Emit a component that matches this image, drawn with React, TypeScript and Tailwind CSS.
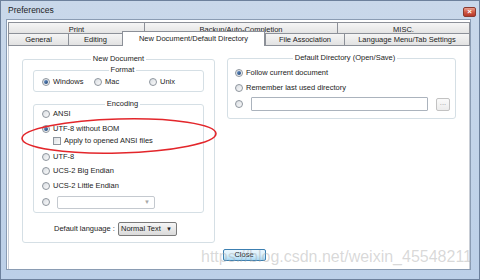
import React from "react";

function Radio({ checked }: { checked?: boolean }) {
  return (
    <span className="flex h-[8px] w-[8px] shrink-0 items-center justify-center rounded-full border border-[#8e959d] bg-gradient-to-br from-[#d9dde2] to-[#fbfbfb]">
      {checked && <span className="h-[4px] w-[4px] rounded-full bg-gradient-to-br from-[#6f9bd0] to-[#1d3f6e]" />}
    </span>
  );
}

function Check() {
  return <span className="h-[8px] w-[8px] shrink-0 border border-[#8e959d] bg-gradient-to-br from-[#dcdfe3] to-[#fbfbfb]" />;
}

function Tab({ w, label, last, sel }: { w: string; label: string; last?: boolean; sel?: boolean }) {
  return (
    <div
      className={
        sel
          ? `${w} flex h-[15px] shrink-0 items-start justify-center border-l border-r border-t border-[#8c9098] bg-white pt-[3px] leading-[8px]`
          : `${w} flex h-[13px] shrink-0 items-center justify-center border-b border-l border-t border-[#8c9098] bg-gradient-to-b from-[#f5f5f5] to-[#e2e2e2] pt-[1px] leading-[8px] ${last ? "border-r" : ""}`
      }
    >
      {label}
    </div>
  );
}

function TopTab({ w, label, last }: { w: string; label: string; last?: boolean }) {
  return (
    <div
      className={`${w} flex h-[11px] shrink-0 items-center justify-center border-l border-t border-[#8c9098] bg-gradient-to-b from-[#f5f5f5] to-[#e4e4e4] pt-[3px] leading-[8px] ${last ? "border-r" : ""}`}
    >
      {label}
    </div>
  );
}

export default function App() {
  return (
    <div className="relative h-[280px] w-[480px] overflow-hidden border border-[#6d819c] bg-gradient-to-b from-[#c9d8ea] to-[#bcd0e8] font-['Liberation_Sans',Arial,sans-serif] text-[7.5px] text-[#1c1c1c]">
      {/* title bar */}
      <div className="flex h-[18px] items-start justify-between pl-[7px] pr-[3px]">
        <span className="mt-[5px] text-[8.5px] leading-[9px] text-[#1e1e1e]">Preferences</span>
        <div className="mt-[6px] flex h-[10px] w-[13px] items-center justify-center rounded-[2px] border border-[#8a3a2f] bg-gradient-to-b from-[#eaa190] via-[#d05a44] to-[#b5372a] text-[8px] font-bold leading-[8px] text-white">
          ×
        </div>
      </div>

      {/* client */}
      <div className="ml-[5px] mr-[8px] flex h-[251px] flex-col border border-[#8a9cb3] bg-white pl-[1px] pt-[2px]">
        {/* tab row 1 */}
        <div className="flex">
          <TopTab w="w-[136px]" label="Print" />
          <TopTab w="w-[193px]" label="Backup/Auto-Completion" />
          <TopTab w="w-[133px]" label="MISC." last />
        </div>
        {/* tab row 2 */}
        <div className="flex h-[13px] items-end">
          <Tab w="w-[60px]" label="General" />
          <Tab w="w-[54px]" label="Editing" />
          <Tab w="w-[143px]" label="New Document/Default Directory" sel />
          <Tab w="w-[79px]" label="File Association" />
          <Tab w="w-[126px]" label="Language Menu/Tab Settings" last />
        </div>

        {/* panel */}
        <div className="flex w-[462px] flex-1 flex-col border-l border-r border-[#c9ced6] pl-[13px]">
          <div className="flex items-start gap-[12px]">
            {/* New Document */}
            <fieldset className="mt-[8px] w-[193px] rounded-[3px] border border-[#d5dfe5] px-[10px] pb-[6px]">
              <legend className="mx-auto px-[2px] leading-[10px]">New Document</legend>

              <fieldset className="mt-[1px] rounded-[3px] border border-[#d5dfe5] pb-[4px] pl-[8px]">
                <legend className="mx-auto px-[2px] leading-[10px]">Format</legend>
                <div className="mt-[2px] flex h-[10px] items-center">
                  <div className="flex w-[52px] items-center gap-[3px]">
                    <Radio checked />
                    <span>Windows</span>
                  </div>
                  <div className="flex w-[55px] items-center gap-[3px]">
                    <Radio />
                    <span>Mac</span>
                  </div>
                  <div className="flex items-center gap-[3px]">
                    <Radio />
                    <span>Unix</span>
                  </div>
                </div>
              </fieldset>

              <fieldset className="mt-[7px] rounded-[3px] border border-[#d5dfe5] pb-[3px] pl-[8px]">
                <legend className="mx-auto px-[2px] leading-[10px]">Encoding</legend>
                <div className="flex h-[10px] items-center gap-[3px]">
                  <Radio />
                  <span>ANSI</span>
                </div>
                <div className="mt-[5px] flex h-[10px] items-center gap-[3px]">
                  <Radio checked />
                  <span>UTF-8 without BOM</span>
                </div>
                <div className="ml-[11px] mt-[2px] flex h-[10px] items-center gap-[3px]">
                  <Check />
                  <span>Apply to opened ANSI files</span>
                </div>
                <div className="mt-[6px] flex h-[10px] items-center gap-[3px]">
                  <Radio />
                  <span>UTF-8</span>
                </div>
                <div className="mt-[4px] flex h-[10px] items-center gap-[3px]">
                  <Radio />
                  <span>UCS-2 Big Endian</span>
                </div>
                <div className="mt-[5px] flex h-[10px] items-center gap-[3px]">
                  <Radio />
                  <span>UCS-2 Little Endian</span>
                </div>
                <div className="mt-[4px] flex h-[14px] items-center gap-[7px]">
                  <Radio />
                  <div className="flex h-[13px] w-[98px] items-center justify-end rounded-[2px] border border-[#c4c9cf] bg-white pr-[4px] text-[6px] text-[#a8a8a8]">
                    ▼
                  </div>
                </div>
              </fieldset>

              <div className="mt-[9px] flex h-[14px] items-center pl-[21px]">
                <span className="w-[64px]">Default language :</span>
                <div className="flex h-[14px] w-[59px] items-center justify-between rounded-[2px] border border-[#7a7a7a] bg-gradient-to-b from-[#f6f6f6] to-[#dadada] pl-[2px] pr-[4px]">
                  <span>Normal Text</span>
                  <span className="text-[6px] text-[#222]">▼</span>
                </div>
              </div>
            </fieldset>

            {/* Default Directory */}
            <fieldset className="mt-[7px] w-[229px] rounded-[3px] border border-[#d5dfe5] pb-[7px] pl-[7px]">
              <legend className="mx-auto px-[2px] leading-[10px]">Default Directory (Open/Save)</legend>
              <div className="mt-[5px] flex h-[10px] items-center gap-[3px]">
                <Radio checked />
                <span>Follow current document</span>
              </div>
              <div className="mt-[5px] flex h-[10px] items-center gap-[3px]">
                <Radio />
                <span>Remember last used directory</span>
              </div>
              <div className="mt-[4px] flex h-[14px] items-center">
                <Radio />
                <div className="ml-[8px] h-[14px] w-[177px] rounded-[1px] border border-[#abb3bd] bg-white" />
                <div className="ml-[8px] flex h-[13px] w-[14px] items-center justify-center rounded-[2px] border border-[#c2c2c2] bg-gradient-to-b from-[#fafafa] to-[#ececec] pb-[2px] text-[#9a9a9a]">
                  ...
                </div>
              </div>
            </fieldset>
          </div>

          {/* Close */}
          <div className="ml-[-3px] mt-[6px] flex justify-center">
            <div className="flex h-[12px] w-[43px] items-center justify-center rounded-[2px] border border-[#3c7fb1] bg-gradient-to-b from-[#eaf6fd] via-[#d9f0fc] to-[#a7d9f5] leading-[8px]">
              Close
            </div>
          </div>
        </div>
      </div>

      {/* red annotation ellipse */}
      <svg className="pointer-events-none absolute left-0 top-0" width="480" height="280" viewBox="0 0 480 280">
        <ellipse cx="118" cy="135" rx="97" ry="17" fill="none" stroke="#e3262b" strokeWidth="1.6" transform="rotate(-1.5 118 135)" />
      </svg>

      {/* watermark */}
      <span className="pointer-events-none absolute left-[200px] top-[248px] whitespace-nowrap font-['Liberation_Sans',Arial,sans-serif] text-[16px] leading-[16px] text-[rgba(170,170,170,0.45)]">
        https://blog.csdn.net/weixin_45548211
      </span>
    </div>
  );
}
